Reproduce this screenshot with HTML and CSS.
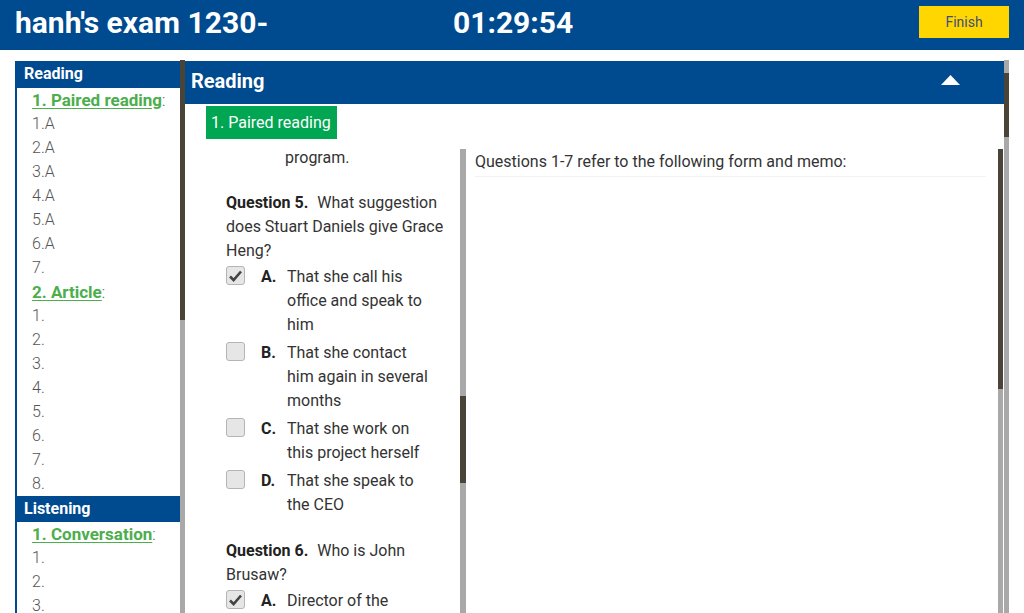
FILE: index.html
```html
<!DOCTYPE html>
<html>
<head>
<meta charset="utf-8">
<link rel="stylesheet" href="styles.css">
</head>
<body>
<header class="topbar">
  <div class="title">hanh's exam 1230-</div>
  <div class="timer">01:29:54</div>
  <button class="finish">Finish</button>
</header>
<div class="workspace">
  <aside class="sidebar">
    <div class="side-head">Reading</div>
    <div class="side-item"><a class="part">1. Paired reading</a><span class="colon">:</span></div>
    <div class="side-item">1.A</div>
    <div class="side-item">2.A</div>
    <div class="side-item">3.A</div>
    <div class="side-item">4.A</div>
    <div class="side-item">5.A</div>
    <div class="side-item">6.A</div>
    <div class="side-item">7.</div>
    <div class="side-item"><a class="part">2. Article</a><span class="colon">:</span></div>
    <div class="side-item">1.</div>
    <div class="side-item">2.</div>
    <div class="side-item">3.</div>
    <div class="side-item">4.</div>
    <div class="side-item">5.</div>
    <div class="side-item">6.</div>
    <div class="side-item">7.</div>
    <div class="side-item">8.</div>
    <div class="side-head">Listening</div>
    <div class="side-item"><a class="part">1. Conversation</a><span class="colon">:</span></div>
    <div class="side-item">1.</div>
    <div class="side-item">2.</div>
    <div class="side-item">3.</div>
  </aside>
  <div class="scrollbar sb-side"><div class="thumb"></div></div>
  <main class="panel">
    <div class="panel-head">
      <span class="panel-title">Reading</span>
      <svg class="caret" width="19" height="10" viewBox="0 0 19 10"><polygon points="9.5,0 19,10 0,10" fill="#fff"/></svg>
    </div>
    <div class="panel-body">
      <div class="tag">1. Paired reading</div>
      <div class="panes">
        <div class="pane-left">
          <div class="q-content">
            <div class="tail">program.</div>
            <div class="question">
              <div class="q-text"><b class="q-num">Question 5.</b> What suggestion does Stuart Daniels give Grace Heng?</div>
              <div class="option">
                <span class="box checked"><svg width="13" height="12" viewBox="0 0 13 12"><path d="M1 6.5 L4.6 10 L12 1.5" stroke="#444" stroke-width="2.6" fill="none"/></svg></span>
                <span class="letter">A.</span>
                <span class="opt-text">That she call his office and speak to him</span>
              </div>
              <div class="option">
                <span class="box"></span>
                <span class="letter">B.</span>
                <span class="opt-text">That she contact him again in several months</span>
              </div>
              <div class="option">
                <span class="box"></span>
                <span class="letter">C.</span>
                <span class="opt-text">That she work on this project herself</span>
              </div>
              <div class="option">
                <span class="box"></span>
                <span class="letter">D.</span>
                <span class="opt-text">That she speak to the CEO</span>
              </div>
            </div>
            <div class="question">
              <div class="q-text"><b class="q-num">Question 6.</b> Who is John Brusaw?</div>
              <div class="option">
                <span class="box checked"><svg width="13" height="12" viewBox="0 0 13 12"><path d="M1 6.5 L4.6 10 L12 1.5" stroke="#444" stroke-width="2.6" fill="none"/></svg></span>
                <span class="letter">A.</span>
                <span class="opt-text">Director of the</span>
              </div>
            </div>
          </div>
          <div class="scrollbar sb-left"><div class="thumb"></div></div>
        </div>
        <div class="pane-right">
          <div class="passage">
            <div class="passage-intro">Questions 1-7 refer to the following form and memo:</div>
          </div>
          <div class="scrollbar sb-right"><div class="thumb"></div></div>
        </div>
      </div>
    </div>
  </main>
  <div class="scrollbar sb-outer"><div class="thumb"></div></div>
</div>
</body>
</html>
```
FILE: styles.css
```css
* { box-sizing: border-box; }
html, body { margin: 0; padding: 0; height: 613px; overflow: hidden; background: #fff; }
body { font-family: Roboto, "Noto Sans", sans-serif; color: #333; font-size: 16px; }

.topbar {
  height: 50px;
  background: #004a8f;
  display: flex;
  align-items: center;
  padding: 0 15px 6px 15px;
  color: #fff;
}
.title { width: 438px; font-size: 30px; font-weight: 700; }
.timer { font-size: 30px; font-weight: 700; }
.finish {
  margin-left: auto;
  width: 90px;
  height: 32px;
  border: none;
  background: #ffd600;
  color: #3d4f7c;
  font-family: Roboto, sans-serif;
  font-size: 14px;
  padding: 0;
}

.workspace {
  display: flex;
  height: 553px;
  margin-top: 10px;
  padding-left: 15px;
}

.sidebar {
  width: 165px;
  margin-top: 1px;
  border-left: 2px solid #004a8f;
  overflow: hidden;
}
.side-head {
  background: #004a8f;
  color: #fff;
  font-weight: 700;
  font-size: 16px;
  height: 27px;
  line-height: 26px;
  padding-left: 7px;
}
.sidebar .side-head:nth-of-type(n+2) { height: 26px; }
.side-item {
  height: 24px;
  line-height: 24px;
  padding-left: 15px;
  color: #555;
  font-weight: 300;
  white-space: nowrap;
}
.part {
  color: #4cae4c;
  font-weight: 700;
  font-size: 17px;
  text-decoration: underline;
  text-underline-offset: 2px;
}
.colon { color: #555; }

.scrollbar { background: #a9a9a9; position: relative; flex: none; }
.scrollbar .thumb { position: absolute; left: 0; right: 0; background: #4a4438; }
.sb-side { width: 5px; height: 553px; }
.sb-side .thumb { top: 0; height: 260px; }
.sb-outer { width: 5px; height: 553px; }
.sb-outer .thumb { top: 13px; height: 64px; }

.panel {
  width: 819px;
  margin-top: 1px;
  display: flex;
  flex-direction: column;
}
.panel-head {
  height: 43px;
  background: #004a8f;
  color: #fff;
  display: flex;
  align-items: center;
  padding: 0 44px 4px 6px;
}
.panel-title { font-size: 20px; font-weight: 700; }
.caret { margin-left: auto; margin-top: -2px; }

.panel-body { padding: 2px 1px 0 21px; flex: 1; display: flex; flex-direction: column; min-height: 0; }
.tag {
  align-self: flex-start;
  background: #00a651;
  color: #fff;
  font-size: 16px;
  height: 33px;
  line-height: 33px;
  padding: 0 6px 0 5px;
}

.panes { display: flex; flex: 1; margin-top: 6px; min-height: 0; }
.pane-left { width: 260px; display: flex; }
.q-content { width: 254px; padding: 1px 0 0 20px; line-height: 24px; }
.tail { padding-left: 59px; height: 24px; }
.question { margin-top: 21px; }
.question + .question { margin-top: 22px; }
.q-text { width: 224px; color: #333; }
.q-num { font-weight: 700; color: #222; margin-right: 5px; }
.option { display: flex; margin-top: 2px; }
.option + .option { margin-top: 4px; }
.box {
  flex: none;
  width: 19px;
  height: 19px;
  margin-top: 1px;
  border: 1px solid #b5b5b5;
  border-radius: 3px;
  background: #e6e6e6;
  display: flex;
  align-items: center;
  justify-content: center;
}
.letter { flex: none; width: 26px; margin-left: 16px; font-weight: 700; color: #222; }
.opt-text { width: 147px; color: #333; }

.sb-left { width: 6px; margin-top: 4px; }
.sb-left .thumb { top: 247px; height: 87px; }

.pane-right { flex: 1; display: flex; }
.passage { flex: 1; padding: 5px 12px 0 9px; }
.passage-intro { line-height: 24px; padding-bottom: 2px; border-bottom: 1px solid #f2f2f2; }
.sb-right { width: 5px; margin-top: 4px; }
.sb-right .thumb { top: 0; height: 240px; }
```
